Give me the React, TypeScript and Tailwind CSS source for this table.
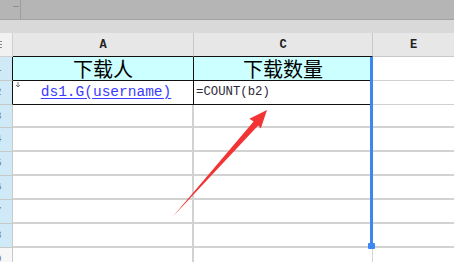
const mono = { fontFamily: '"Liberation Mono", "DejaVu Sans Mono", monospace' };
const cjk = { fontFamily: '"Noto Sans CJK SC", "Noto Sans", sans-serif' };

function RowHead({ n, black, selected }: { n: number; black?: boolean; selected?: boolean }) {
  return (
    <div
      className={`overflow-hidden border-b border-r flex items-center ${
        selected ? 'bg-[#cfe9f6]' : 'bg-[#f7f7f7]'
      } ${black ? 'border-r-[#111] border-b-[#c8c8c8]' : 'border-[#c8c8c8]'}`}
    >
      <span className="-ml-[5px] text-[11px] text-[#777]" style={mono}>
        {n}
      </span>
    </div>
  );
}

export default function App() {
  const rest = [3, 4, 5, 6, 7, 8];

  return (
    <div className="relative w-[454px] h-[262px] overflow-hidden bg-white">
      {/* toolbar strip */}
      <div className="h-[20px] bg-[#b5b5b5] border-b border-[#a3a3a3] flex">
        <div className="w-[21px] border-r border-[#9e9e9e] relative">
          <div className="absolute left-[13px] top-[6px] w-[6px] h-px bg-[#8f8f8f]" />
        </div>
      </div>
      <div className="h-[13px] bg-[#d9d9d9]" />

      {/* sheet */}
      <div className="relative grid grid-cols-[13px_181px_179px_1fr] grid-rows-[24px_24px_24px_23px_24px_24px_24px_24px_24px_24px_1fr]">
        {/* column headers */}
        <div className="bg-[#f1f1f1] border-r border-b border-[#d0d0d0] overflow-hidden flex flex-col justify-center gap-[2px]">
          <div className="w-[2px] h-px bg-[#888]" />
          <div className="w-[2px] h-px bg-[#888]" />
          <div className="w-[2px] h-px bg-[#888]" />
        </div>
        <div className="bg-[#e7e7e7] border-r border-[#c9c9c9] border-b border-b-[#111] flex items-center justify-center text-[12px] font-bold text-[#222]" style={mono}>
          A
        </div>
        <div className="bg-[#e7e7e7] border-r border-[#c9c9c9] border-b border-b-[#111] flex items-center justify-center text-[12px] font-bold text-[#222]" style={mono}>
          C
        </div>
        <div className="bg-[#e7e7e7] border-b border-[#c9c9c9] flex items-center justify-center text-[12px] font-bold text-[#222]" style={mono}>
          E
        </div>

        {/* row 1: titles */}
        <RowHead n={1} black selected />
        <div className="bg-[#ccffff] border-r border-b border-[#111] flex items-center justify-center text-[20px] leading-none text-black" style={cjk}>
          下载人
        </div>
        <div className="bg-[#ccffff] border-r border-b border-[#111] flex items-center justify-center text-[20px] leading-none text-black" style={cjk}>
          下载数量
        </div>
        <div className="border-b border-[#d0d0d0]" />

        {/* row 2: data cells */}
        <RowHead n={2} black selected />
        <div className="relative border-r border-b border-[#111] flex items-center justify-center pl-[6px]">
          <svg className="absolute left-[2px] top-[1px]" width="6" height="6" viewBox="0 0 6 6">
            <path d="M3 0v5M1 3l2 2 2-2" stroke="#777" strokeWidth="1" fill="none" />
          </svg>
          <span className="text-[14.5px] text-[#3b3bff] underline underline-offset-2" style={mono}>
            ds1.G(username)
          </span>
        </div>
        <div className="border-r border-b border-[#111] flex items-center pl-[2px]">
          <span className="text-[12.3px] text-[#2e2a3a]" style={mono}>
            =COUNT(b2)
          </span>
        </div>
        <div className="border-b border-[#d0d0d0]" />

        {/* empty rows */}
        {rest.map((n) => (
          <div key={n} className="contents">
            <RowHead n={n} selected />
            <div className="border-r-2 border-b-2 border-[#d2d2d2]" />
            <div className="border-r border-b-2 border-[#d2d2d2]" />
            <div className="border-b-2 border-[#d2d2d2]" />
          </div>
        ))}
        <RowHead n={9} />
        <div className="border-r-2 border-[#d2d2d2]" />
        <div className="border-r border-[#d2d2d2]" />
        <div />

        {/* selection edge on column C */}
        <div className="absolute left-[370px] top-[24px] w-[3px] h-[190px] bg-[#3d87f2]" />
        <div className="absolute left-[368px] top-[210px] w-[7px] h-[6px] rounded-[1px] bg-[#3d87f2]" />
      </div>

      {/* callout arrow */}
      <svg className="absolute inset-0 pointer-events-none" width="454" height="262" viewBox="0 0 454 262">
        <polygon
          points="172.5,217 258.2,125.4 260.8,128.4 267,110 249.4,118.8 253.6,121.6"
          fill="#f23434"
        />
      </svg>
    </div>
  );
}
